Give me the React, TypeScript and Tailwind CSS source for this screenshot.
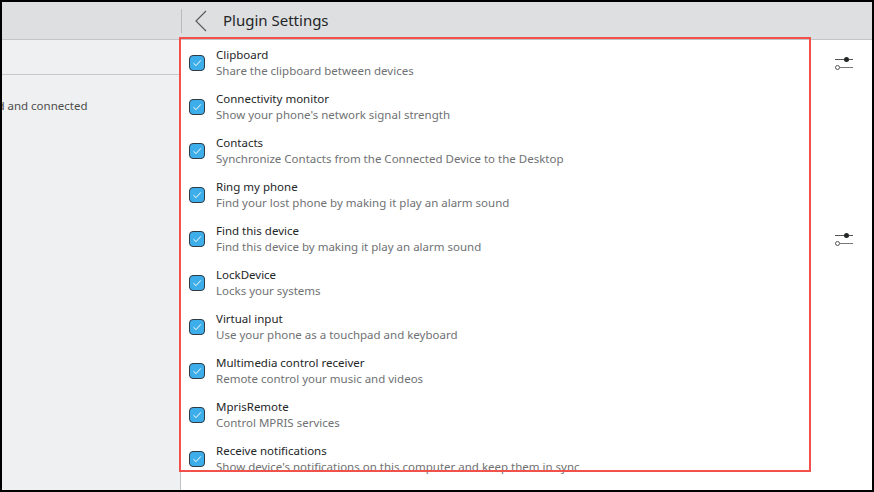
import React from "react";

const plugins: { t: string; d: string; cfg?: boolean }[] = [
  { t: "Clipboard", d: "Share the clipboard between devices", cfg: true },
  { t: "Connectivity monitor", d: "Show your phone's network signal strength" },
  { t: "Contacts", d: "Synchronize Contacts from the Connected Device to the Desktop" },
  { t: "Ring my phone", d: "Find your lost phone by making it play an alarm sound" },
  { t: "Find this device", d: "Find this device by making it play an alarm sound", cfg: true },
  { t: "LockDevice", d: "Locks your systems" },
  { t: "Virtual input", d: "Use your phone as a touchpad and keyboard" },
  { t: "Multimedia control receiver", d: "Remote control your music and videos" },
  { t: "MprisRemote", d: "Control MPRIS services" },
  { t: "Receive notifications", d: "Show device's notifications on this computer and keep them in sync" },
  { t: "Presentation remote", d: "Use your phone to navigate your slides" },
];

function Check() {
  return (
    <div className="w-[16px] h-[16px] rounded-[4px] border border-[#2e3a44] bg-[#3daee9] flex items-center justify-center shrink-0">
      <svg width="10" height="8" viewBox="0 0 10 8">
        <path d="M1.5 4.2 L4 6.6 L8.8 1.4" fill="none" stroke="#ffffff" strokeWidth="1" />
      </svg>
    </div>
  );
}

function Cfg() {
  return (
    <svg width="18" height="14" viewBox="0 0 18 14" className="shrink-0">
      <line x1="0" y1="3.5" x2="18" y2="3.5" stroke="#555" strokeWidth="1" />
      <circle cx="11.5" cy="3.5" r="2.5" fill="#232627" />
      <line x1="5" y1="11.5" x2="18" y2="11.5" stroke="#777" strokeWidth="1" />
      <circle cx="2.5" cy="11.5" r="2" fill="#fff" stroke="#555" strokeWidth="1" />
    </svg>
  );
}

export default function App() {
  return (
    <div
      className="relative w-[874px] h-[492px] border-2 border-black overflow-hidden flex flex-col bg-white"
      style={{ fontFamily: '"Noto Sans", "Open Sans", sans-serif' }}
    >
      <div className="h-[37px] bg-[#dedfe1] flex items-center shrink-0">
        <div className="w-[179px] shrink-0" />
        <div className="w-px h-[24px] bg-[#b9babc]" />
        <svg width="14" height="22" viewBox="0 0 14 22" className="ml-[12px]">
          <path d="M12 1 L2 11 L12 21" fill="none" stroke="#5a5b5d" strokeWidth="1.2" />
        </svg>
        <div className="ml-[15px] text-[15px] text-[#232627] leading-none pb-[1px]">Plugin Settings</div>
      </div>
      <div className="flex flex-1 min-h-0 border-t border-[#c4c5c7]">
        <div className="w-[179px] shrink-0 bg-[#eff0f1] border-r border-[#c0c1c3] flex flex-col">
          <div className="h-[35px] border-b border-[#c8c9cb]" />
          <div className="mt-[22px] text-[11.5px] text-[#4d4d4d] whitespace-nowrap ml-[-32px]">Paired and connected</div>
        </div>
        <div className="flex-1 flex flex-col pt-[1px]">
          {plugins.map((p) => (
            <div key={p.t} className="flex items-center h-[44px] shrink-0 pl-[8px] pr-[19px]">
              <Check />
              <div className="ml-[11px] flex flex-col">
                <div className="text-[11.5px] leading-[16px] text-[#232627] whitespace-nowrap">{p.t}</div>
                <div className="text-[11.5px] leading-[16px] text-[#6f7173] whitespace-nowrap">{p.d}</div>
              </div>
              {p.cfg && (
                <div className="ml-auto">
                  <Cfg />
                </div>
              )}
            </div>
          ))}
        </div>
      </div>
      <div className="absolute left-[177px] top-[35px] w-[632px] h-[435px] border-2 border-[#f2514b] pointer-events-none" />
    </div>
  );
}
